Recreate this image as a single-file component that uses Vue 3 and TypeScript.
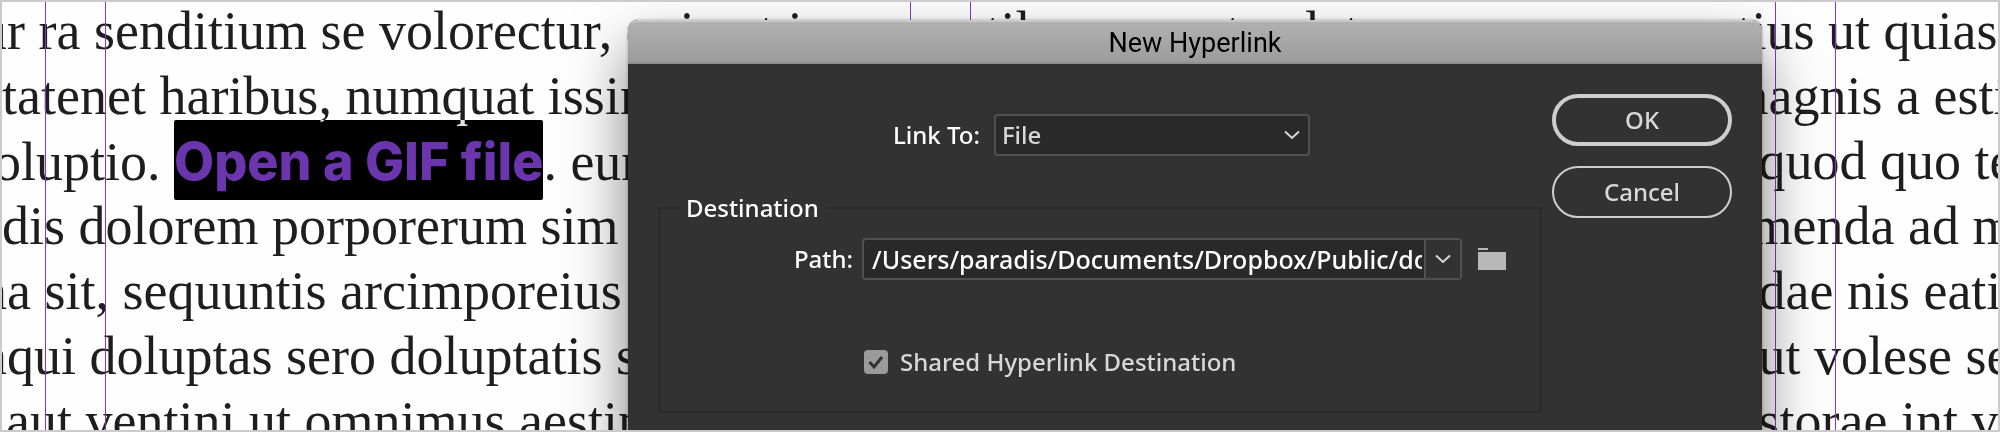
<script setup lang="ts">
import { ref } from 'vue'

type Hang = 'none' | 'small' | 'medium' | 'large' | 'inset'

interface Line {
  left: string
  leftHang: Hang
  link?: string
  after?: string
  right: string
  rightHang: Hang
}

const lines: Line[] = [
  { left: 'ur ra senditium se volorectur, qui ant in rerum til re nonset velet', leftHang: 'medium', right: 'tius ut quias', rightHang: 'medium' },
  { left: 'tatenet haribus, numquat issin', leftHang: 'none', right: 'magnis a estia', rightHang: 'large' },
  { left: 'oluptio. ', leftHang: 'small', link: 'Open a GIF file', after: '. eum', right: 'quod quo tes', rightHang: 'none' },
  { left: 'dis dolorem porporerum sim', leftHang: 'none', right: 'menda ad min', rightHang: 'small' },
  { left: 'na sit, sequuntis arcimporeius', leftHang: 'medium', right: 'dae nis eatia', rightHang: 'none' },
  { left: 'nqui doluptas sero doluptatis s', leftHang: 'medium', right: 'ut volese sed', rightHang: 'none' },
  { left: 'aut ventini ut omnimus aestin', leftHang: 'inset', right: 'storae int ver', rightHang: 'none' },
]

const linkTo = ref('File')
const path = ref('/Users/paradis/Documents/Dropbox/Public/docs/open.gif')
const shared = ref(true)
</script>

<template>
  <main class="canvas">
    <div class="copy">
      <p v-for="(line, i) in lines" :key="i" class="line">
        <span class="part" :class="line.leftHang">{{ line.left }}<mark v-if="line.link" class="selection"><span class="selected-text">{{ line.link }}</span></mark>{{ line.after }}</span>
        <span class="part" :class="line.rightHang">{{ line.right }}</span>
      </p>
    </div>

    <div class="guides" aria-hidden="true">
      <i class="guide g1"></i><i class="guide g2"></i><i class="guide g3"></i>
      <i class="guide g4"></i><i class="guide g5"></i><i class="guide g6"></i>
    </div>

    <form class="dialog" role="dialog" aria-labelledby="dialog-title" @submit.prevent>
      <h1 id="dialog-title" class="title">New Hyperlink</h1>
      <div class="body">
        <div class="fields">
          <div class="row link-row">
            <label for="link-to">Link To:</label>
            <div class="select-wrap">
              <select id="link-to" v-model="linkTo">
                <option>File</option>
                <option>URL</option>
                <option>Email</option>
                <option>Page</option>
              </select>
              <svg class="chevron" viewBox="0 0 16 10" aria-hidden="true"><path d="M1 1.5 8 8 15 1.5" /></svg>
            </div>
          </div>

          <fieldset class="destination">
            <legend>Destination</legend>
            <div class="row path-row">
              <label for="path">Path:</label>
              <div class="combo">
                <input id="path" v-model="path" type="text" spellcheck="false" />
                <button type="button" class="drop" aria-label="Recent paths">
                  <svg class="chevron" viewBox="0 0 16 10" aria-hidden="true"><path d="M1 1.5 8 8 15 1.5" /></svg>
                </button>
              </div>
              <button type="button" class="browse" aria-label="Browse">
                <svg viewBox="0 0 28 22" aria-hidden="true"><path d="M0 0H10V2H0ZM0 4H28V22H0Z" /></svg>
              </button>
            </div>
            <div class="row shared-row">
              <input id="shared" v-model="shared" type="checkbox" />
              <label for="shared">Shared Hyperlink Destination</label>
              <svg v-if="shared" class="tick" viewBox="0 0 24 24" aria-hidden="true"><path d="M5.5 12 10 17 18 7" /></svg>
            </div>
          </fieldset>
        </div>
        <div class="actions">
          <button type="submit" class="pill primary">OK</button>
          <button type="button" class="pill">Cancel</button>
        </div>
      </div>
    </form>
  </main>
</template>

<style>
body {
  margin: 0;
}
</style>

<style scoped>
.canvas {
  position: relative;
  box-sizing: border-box;
  height: 100vh;
  overflow: hidden;
  border: 2px solid #cbcbcb;
  background: #fefefe;
  isolation: isolate;
}

.copy {
  margin-top: -3px;
  font: 54px/65px "Liberation Serif", "Times New Roman", serif;
  color: #1e1e1e;
}

.line {
  display: grid;
  grid-template-columns: 88% 1fr;
  margin: 0;
  height: 65px;
  white-space: pre;
}

.part {
  min-width: 0;
}

.small {
  margin-left: -8px;
}

.medium {
  margin-left: -22px;
}

.large {
  margin-left: -32px;
}

.inset {
  margin-left: 4px;
}

.selection {
  position: relative;
  background: none;
  color: #6b35ae;
  font: 800 52px/65px Inter, sans-serif;
}

.selection::before {
  content: "";
  position: absolute;
  inset: -10px 0 -7px;
  border-radius: 2px;
  background: #fff;
  mix-blend-mode: difference;
}

.selected-text {
  position: relative;
}

.guide {
  position: absolute;
  top: 0;
  bottom: 0;
  width: 1px;
  background: #8a35c4;
}

.g1 { left: 2.15%; }
.g2 { left: 5.15%; }
.g3 { left: 45.5%; }
.g4 { left: 48.5%; }
.g5 { left: 88.85%; }
.g6 { left: 91.85%; }

.dialog {
  position: absolute;
  top: 18px;
  left: 31.36%;
  right: 11.82%;
  height: 560px;
  border-radius: 10px 10px 0 0;
  background: #323232;
  box-shadow: 0 30px 60px rgba(0, 0, 0, 0.5), 0 0 3px rgba(0, 0, 0, 0.3);
  color: #fff;
  font: 500 24px/32px "Noto Sans", "Open Sans", sans-serif;
}

.title {
  box-sizing: border-box;
  height: 44px;
  margin: 0;
  border-top: 2px solid #c9c9c9;
  border-bottom: 2px solid #8f8f8f;
  border-radius: 10px 10px 0 0;
  background: linear-gradient(#b1b1b1, #9c9c9c);
  color: #000;
  font: 400 27px/42px Roboto, sans-serif;
  text-align: center;
}

.body {
  display: flex;
  justify-content: space-between;
  gap: 10px;
  padding: 0 30px;
}

.fields {
  flex: 1;
}

.row {
  display: flex;
  align-items: center;
}

.link-row {
  gap: 14px;
  padding: 50px 0 0 235px;
}

.select-wrap {
  position: relative;
  width: 316px;
}

select {
  appearance: none;
  box-sizing: border-box;
  display: block;
  width: 100%;
  height: 42px;
  padding: 0 6px;
  border: 2px solid #515151;
  border-radius: 4px;
  background: #292929;
  color: #d8d8d8;
  font: inherit;
}

.chevron {
  width: 16px;
  height: 10px;
  fill: none;
  stroke: #d8d8d8;
  stroke-width: 2;
}

.select-wrap .chevron {
  position: absolute;
  right: 10px;
  top: 16px;
  pointer-events: none;
}

.destination {
  box-sizing: border-box;
  height: 221px;
  margin: 36px 0 0;
  padding: 0 0 0 134px;
  border: 2px solid #2a2a2a;
  border-radius: 4px;
}

legend {
  margin-left: -112px;
  padding: 0 8px 0 4px;
}

.path-row {
  gap: 9px;
  padding-top: 14px;
}

.combo {
  display: flex;
  box-sizing: border-box;
  width: 600px;
  height: 42px;
  border: 2px solid #515151;
  border-radius: 4px;
  background: #292929;
  overflow: hidden;
}

.combo input {
  flex: 1;
  min-width: 0;
  padding: 0 2px 0 8px;
  border: 0;
  background: none;
  color: #fff;
  font: inherit;
  font-size: 25px;
}

.drop {
  display: flex;
  align-items: center;
  justify-content: center;
  width: 36px;
  padding: 0;
  border: 0;
  border-left: 2px solid #515151;
  background: #323232;
}

.browse {
  margin-left: 7px;
  padding: 0;
  border: 0;
  background: none;
}

.browse svg {
  display: block;
  width: 28px;
  height: 22px;
  fill: #b8b8b8;
}

.shared-row {
  position: relative;
  gap: 12px;
  padding: 66px 0 0 70px;
  color: #d8d8d8;
}

.shared-row input {
  appearance: none;
  width: 24px;
  height: 24px;
  margin: 0;
  border-radius: 4px;
  background: #9b9b9b;
}

.tick {
  position: absolute;
  left: 70px;
  bottom: 4px;
  width: 24px;
  height: 24px;
  fill: none;
  stroke: #323232;
  stroke-width: 3;
  pointer-events: none;
}

.actions {
  display: flex;
  flex-direction: column;
  gap: 20px;
  padding-top: 30px;
}

.pill {
  box-sizing: border-box;
  width: 180px;
  height: 52px;
  border: 2px solid #cecece;
  border-radius: 26px;
  background: none;
  color: #d8d8d8;
  font: inherit;
}

.primary {
  border-width: 4px;
}
</style>
